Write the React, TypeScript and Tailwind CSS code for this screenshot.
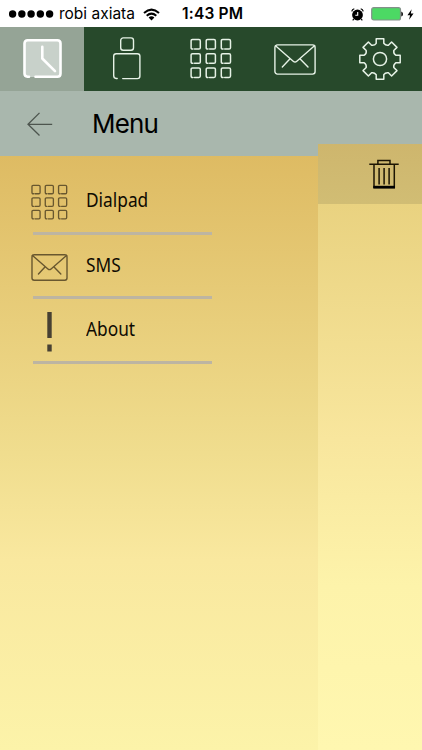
import type { ReactNode } from "react";

// One tooth plus the rounded valley after it, repeated around the wheel
const gearPath = (() => {
  const tooth = [[-3.8, -15.7], [-3.8, -20.2], [3.8, -20.2], [3.8, -15.7], [5.7, -13.2]];
  let d = "";
  for (let i = 0; i < 8; i++) {
    const a = (i * Math.PI) / 4;
    tooth.forEach(([x, y], index) => {
      const px = (x * Math.cos(a) - y * Math.sin(a)).toFixed(2);
      const py = (x * Math.sin(a) + y * Math.cos(a)).toFixed(2);
      if (index === 4) d += `Q${px} ${py} `;
      else if (index === 0) d += i === 0 ? `M${px} ${py}` : `${px} ${py}`;
      else d += `L${px} ${py}`;
    });
  }
  return `${d}-3.8 -15.7Z`;
})();

function ClockIcon() {
  return (
    <svg className="size-11" viewBox="0 0 44 44" fill="none" stroke="#fff" strokeWidth="2.6" strokeLinecap="round" strokeLinejoin="round">
      <rect x="4" y="3" width="37" height="37" rx="3.5" fill="#c8d1ca" stroke="none" />
      <path d="M9 39.7H7.5Q4.5 39.5 4.5 36.5V6.5Q4.5 3.3 7.7 3.3H37.3Q40.5 3.3 40.5 6.5V36.5Q40.5 39.700 37.300 39.700H15.500" />
      <path d="M22.3 9.8V21.5L35 34.2" />
    </svg>
  );
}

function PersonIcon() {
  return (
    <svg className="size-11" viewBox="0 0 44 44" fill="none" stroke="#e6f2e6" strokeWidth="1.4" strokeLinecap="round">
      <rect x="15.7" y="0.9" width="12.8" height="12.3" rx="2.5" />
      <path d="M12.2 41.5H11.2Q8.7 41.3 8.7 38.5V19Q8.7 16.7 11.2 16.7H32.4Q34.9 16.7 34.9 19V39Q34.9 41.6 32.4 41.6H17.7" />
    </svg>
  );
}

function GridIcon({ className, stroke }: { className: string; stroke: string }) {
  return (
    <svg className={className} viewBox="1 1 42 42" fill="none" stroke={stroke} strokeWidth="1.5" strokeLinecap="round">
      {[0, 1, 2].map((row) =>
        [0, 1, 2].map((col) => (
          <path
            key={`${row}-${col}`}
            transform={`translate(${col * 15.1 + 2.1} ${row * 14.2 + 2.5})`}
            d="M1.8 9.6H1.4Q0 9.6 0 8.2V1.4Q0 0 1.4 0H7.8Q9.2 0 9.2 1.4V8.2Q9.2 9.6 7.8 9.6H3.4"
          />
        ))
      )}
    </svg>
  );
}

function MailIcon({ className, stroke, width = 1.4 }: { className: string; stroke: string; width?: number }) {
  return (
    <svg className={className} viewBox="0 0 42 31" fill="none" stroke={stroke} strokeWidth={width} strokeLinecap="round" strokeLinejoin="round">
      <rect x="0.9" y="0.9" width="40.2" height="29.2" rx="2.5" />
      <path d="M1.5 1.8L19.2 17.2Q21 18.7 22.8 17.2L40.5 1.8M15.8 15L8.3 23M26.2 15L34 23" />
    </svg>
  );
}

function GearIcon() {
  return (
    <svg className="size-11" viewBox="-22 -22 44 44" fill="none" stroke="#e6f2e6" strokeWidth="1.5" strokeLinejoin="round">
      <path d={gearPath} />
      <circle r="6.6" />
    </svg>
  );
}

function StatusBar() {
  return (
    <div className="flex h-[27px] shrink-0 items-center bg-white pl-[9px] pr-2 pt-px text-black font-['Inter','Liberation_Sans',sans-serif]">
      <svg className="h-2 w-[45px]" viewBox="0 0 45 8">
        {[0, 1, 2, 3, 4].map((dot) => (
          <circle key={dot} cx={3.6 + dot * 9.25} cy="4" r="3.7" />
        ))}
      </svg>
      <span className="ml-[5px] w-[84px] whitespace-nowrap text-[15.5px]">robi axiata</span>
      <svg className="h-[13px] w-[17px]" viewBox="0 0 17 13" fill="none" stroke="#000" strokeWidth="2">
        <path d="M1 4.9Q8.5 -1.7 16 4.9M3.7 7.7Q8.5 3.5 13.3 7.7" />
        <path d="M5.6 9.5Q8.5 7.2 11.4 9.5L8.5 12.4Z" fill="#000" stroke="none" />
      </svg>
      <span className="ml-[22px] whitespace-nowrap text-[15.5px] font-semibold tracking-[0.2px]">1:43 PM</span>
      <svg className="ml-auto h-[13px] w-[13px]" viewBox="0 0 13 13">
        <circle cx="6.5" cy="7" r="5.4" />
        <path d="M0.7 3.3Q1.3 1.3 3.3 0.7M9.7 0.7Q11.7 1.3 12.3 3.3M2.8 11L1.7 12.4M10.2 11L11.3 12.4" stroke="#000" strokeWidth="1.2" fill="none" />
        <path d="M6.7 4V7.3H4.3" stroke="#fff" strokeWidth="1.1" fill="none" />
      </svg>
      <svg className="ml-[7px] h-[14px] w-[33px]" viewBox="0 0 33 14">
        <rect x="0.7" y="0.7" width="28.8" height="12.3" rx="2" fill="#4cd964" stroke="#83908a" strokeWidth="1.2" />
        <path d="M30.3 4.5Q32 5 32 7T30.3 9.5Z" />
      </svg>
      <svg className="ml-[3px] h-[13px] w-[7px]" viewBox="0 0 8 13">
        <path d="M5.3 0.5L0.5 7.3H3.5L2.4 12.5L7.5 5.3H4.4Z" />
      </svg>
    </div>
  );
}

function MenuItem({ icon, label }: { icon: ReactNode; label: string }) {
  return (
    <li className="flex h-[61.5px] items-center">
      <span className="flex w-[37px] justify-center pt-[3.5px]">{icon}</span>
      <span className="ml-[18px] origin-left scale-x-[0.91] text-[19px] leading-none text-[#0f0b02] font-['Noto_Sans','Open_Sans',sans-serif]">
        {label}
      </span>
    </li>
  );
}

function Divider() {
  return <li className="ml-[2px] h-[3px] w-[179px] bg-[#bdb5a2]" />;
}

export default function App() {
  return (
    <div className="flex h-[750px] w-[422px] flex-col overflow-hidden bg-[#a9b7ad]">
      <StatusBar />
      <nav className="grid h-16 shrink-0 grid-cols-5 bg-[#27492b]">
        <button className="flex items-center justify-center bg-[#95a496]"><ClockIcon /></button>
        <button className="flex items-center justify-center"><PersonIcon /></button>
        <button className="flex items-center justify-center"><GridIcon className="size-[42px]" stroke="#e6f2e6" /></button>
        <button className="flex items-center justify-center"><MailIcon className="h-[31px] w-[42px]" stroke="#e6f2e6" /></button>
        <button className="flex items-center justify-center"><GearIcon /></button>
      </nav>
      <div className="flex min-h-0 flex-1">
        <aside className="flex w-[318px] flex-col">
          <header className="flex h-[65px] shrink-0 items-center pl-[27px]">
            <svg className="h-6 w-[26px]" viewBox="0 0 26 24" fill="none" stroke="#4d554e" strokeWidth="1.3">
              <path d="M25.2 12.3H1M12.5 0.9L1 12.3L12.5 23.5" />
            </svg>
            <h1 className="ml-[39px] text-[26px] tracking-[-0.8px] text-black font-['Inter','Liberation_Sans',sans-serif]">Menu</h1>
          </header>
          <div className="flex-1 bg-[linear-gradient(#debb63,#f0dd8e_50%,#f9e89f_68%,#fcf3a9)] pl-[31px] pt-[14px]">
            <ul>
              <MenuItem icon={<GridIcon className="size-[37px]" stroke="#68572f" />} label="Dialpad" />
              <Divider />
              <MenuItem icon={<MailIcon className="h-[27px] w-[37px]" stroke="#68572f" width={1.6} />} label="SMS" />
              <Divider />
              <MenuItem
                icon={
                  <svg className="h-10 w-[5px]" viewBox="0 0 5 40" fill="#474033">
                    <rect x="0.3" width="4.4" height="26" />
                    <rect x="0.3" y="32.5" width="4.4" height="7" />
                  </svg>
                }
                label="About"
              />
              <Divider />
            </ul>
          </div>
        </aside>
        <main className="flex flex-1 flex-col pt-[53px]">
          <div className="flex h-[60px] shrink-0 items-center justify-end bg-linear-to-b from-[#ceb66d] to-[#d1bd74] pr-[23px]">
            <svg className="h-[30px] w-[30px]" viewBox="0 0 30 30" fill="none" stroke="#1c1503" strokeWidth="1.5">
              <path d="M0.3 5.3H29.7M8.9 5V1.5H21V5M5 5.5V29M25.3 5.5V29M10.1 9V25.5M15.1 9V25.5M20.1 9V25.5" />
              <path d="M4.3 28.2H26" stroke="#000" strokeWidth="2.8" />
            </svg>
          </div>
          <div className="flex-1 bg-[linear-gradient(#e9d280,#f8e69d_43%,#fdf3aa_70%,#fff7b0)]" />
        </main>
      </div>
    </div>
  );
}
